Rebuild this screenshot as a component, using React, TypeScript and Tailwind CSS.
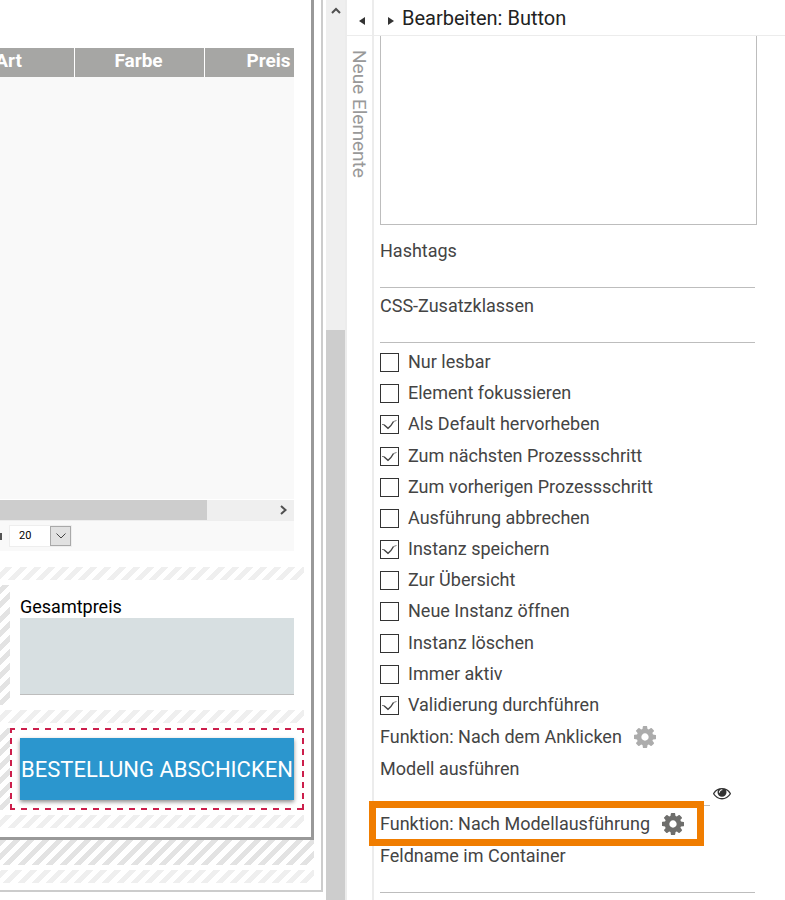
import React from 'react';

interface OptionItem {
  id: string;
  label: string;
  checked: boolean;
}

const OPTIONS: OptionItem[] = [
  { id: 'readonly', label: 'Nur lesbar', checked: false },
  { id: 'focus', label: 'Element fokussieren', checked: false },
  { id: 'default', label: 'Als Default hervorheben', checked: true },
  { id: 'next', label: 'Zum nächsten Prozessschritt', checked: true },
  { id: 'prev', label: 'Zum vorherigen Prozessschritt', checked: false },
  { id: 'cancel', label: 'Ausführung abbrechen', checked: false },
  { id: 'save', label: 'Instanz speichern', checked: true },
  { id: 'overview', label: 'Zur Übersicht', checked: false },
  { id: 'open', label: 'Neue Instanz öffnen', checked: false },
  { id: 'delete', label: 'Instanz löschen', checked: false },
  { id: 'active', label: 'Immer aktiv', checked: false },
  { id: 'validate', label: 'Validierung durchführen', checked: true },
];

const COLUMNS = ['Art', 'Farbe', 'Preis'];

const LIGHT_STRIPES =
  'bg-[repeating-linear-gradient(-45deg,#ffffff_0px,#ffffff_5px,#efefef_5px,#efefef_10px)]';
const DARK_STRIPES =
  'bg-[repeating-linear-gradient(-45deg,#ffffff_0px,#ffffff_5px,#e3e3e3_5px,#e3e3e3_10px)]';

// Long dashes on all four sides, wider than the browser's own dashed border
const DASHED_FRAME =
  'bg-[repeating-linear-gradient(90deg,#cc1f4c_0px,#cc1f4c_5px,transparent_5px,transparent_11px,#cc1f4c_11px,#cc1f4c_12px),repeating-linear-gradient(90deg,#cc1f4c_0px,#cc1f4c_5px,transparent_5px,transparent_11px,#cc1f4c_11px,#cc1f4c_12px),repeating-linear-gradient(180deg,#cc1f4c_0px,#cc1f4c_5px,transparent_5px,transparent_10px,#cc1f4c_10px,#cc1f4c_11px),repeating-linear-gradient(180deg,#cc1f4c_0px,#cc1f4c_5px,transparent_5px,transparent_10px,#cc1f4c_10px,#cc1f4c_11px)] bg-[length:100%_2px,100%_2px,2px_100%,2px_100%] bg-[position:0_0,0_100%,0_0,100%_0] bg-no-repeat';

const GearIcon: React.FC<{ className?: string }> = ({ className }) => (
  <svg viewBox="0 128 1536 1536" className={className} fill="currentColor" aria-hidden="true">
    <path d="M1024 896q0-106-75-181t-181-75-181 75-75 181 75 181 181 75 181-75 75-181zm512-109v222q0 12-8 23t-20 13l-185 28q-19 54-39 91 35 50 107 138 10 12 10 25t-9 23q-27 37-99 108t-94 71q-12 0-26-9l-138-108q-44 23-91 38-16 136-29 186-7 28-36 28h-222q-14 0-24.5-8.5t-11.5-21.5l-28-184q-49-16-90-37l-141 107q-10 9-25 9-14 0-25-11-126-114-165-168-7-10-7-23 0-12 8-23 15-21 51-66.5t54-70.5q-27-50-41-99l-183-27q-13-2-21-12.5t-8-23.5v-222q0-12 8-23t19-13l186-28q14-46 39-92-40-57-107-138-10-12-10-24 0-10 9-23 26-36 98.5-107.5t94.5-71.5q13 0 26 10l138 107q44-23 91-38 16-136 29-186 7-28 36-28h222q14 0 24.5 8.5t11.5 21.5l28 184q49 16 90 37l142-107q9-9 24-9 13 0 25 10 129 119 165 170 7 8 7 22 0 12-8 23-15 21-51 66.5t-54 70.5q26 50 41 98l183 28q13 2 21 12.5t8 23.5z" />
  </svg>
);

const EyeIcon: React.FC<{ className?: string }> = ({ className }) => (
  <svg viewBox="0 96 1792 1600" className={className} fill="currentColor" aria-hidden="true">
    <path d="M1664 960q-152-236-381-353 61 104 61 225 0 185-131.5 316.5t-316.5 131.5-316.5-131.5-131.5-316.5q0-121 61-225-229 117-381 353 133 205 333.5 326.5t434.5 121.5 434.5-121.5 333.5-326.5zm-720-384q0-20-14-34t-34-14q-125 0-214.5 89.5t-89.5 214.5q0 20 14 34t34 14 34-14 14-34q0-86 61-147t147-61q20 0 34-14t14-34zm848 384q0 34-20 69-140 230-376.5 368.5t-499.5 138.5-499.5-139-376.5-368q-20-35-20-69t20-69q140-229 376.5-368t499.5-139 499.5 139 376.5 368q20 35 20 69z" />
  </svg>
);

const Field: React.FC<{ id: string; label: string; children?: React.ReactNode }> = ({ id, label, children }) => (
  <div className="mb-0.5">
    <label htmlFor={id} className="flex h-8 items-center pb-0.5">{label}</label>
    <div className="flex">
      <input id={id} type="text" className="h-[21px] min-w-0 flex-1 border-b border-[#bdbdbd] outline-none" />
      {children}
    </div>
  </div>
);

const Option: React.FC<{ item: OptionItem }> = ({ item }) => (
  <label className="flex items-center">
    <span className="relative mr-[9px] h-[19px] w-[19px]">
      <input
        type="checkbox"
        defaultChecked={item.checked}
        className="peer block h-[19px] w-[19px] appearance-none border border-[#333333] bg-white"
      />
      <svg
        viewBox="0 0 19 19"
        className="pointer-events-none absolute inset-0 hidden h-[19px] w-[19px] peer-checked:block"
        fill="none"
        stroke="#444444"
        aria-hidden="true"
      >
        <path d="M2 9.500h2" strokeWidth="0.7" />
        <path d="M4 9.700l4 3.600q3-2 5.500-6.800" strokeWidth="1.400" />
        <path d="M13.500 6.500l3-1" strokeWidth="0.7" />
      </svg>
    </span>
    <span className="pb-0.5">{item.label}</span>
  </label>
);

const FormCanvas: React.FC = () => (
  <main className="w-[326px] shrink-0 overflow-hidden">
    <div className="mr-[3px] border-r-2 border-b-2 border-[#cccccc] pr-[7px] pb-[7px]">
      <div className="border-r-3 border-b-3 border-[#999999] pt-12 pr-[7px] pb-[9px]">
        {/* Order positions */}
        <section className="mr-2.5 bg-[#f9f9f9]">
          <div className="flex h-[451px] flex-col overflow-hidden">
            <table className="-ml-[55px] w-[390px] table-fixed border-separate border-spacing-0 bg-[#a6a6a4] text-[19px] text-white">
              <thead>
                <tr className="h-[29px]">
                  {COLUMNS.map(col => (
                    <th key={col} className="border-r border-white p-0 pr-0.5 pb-1 text-center leading-6 font-bold">{col}</th>
                  ))}
                </tr>
              </thead>
            </table>
          </div>
          <div className="flex h-[22px] items-stretch border-y border-t-white border-b-[#eeeeee] bg-[#efefef]">
            <div className="w-[207px] bg-[#cdcdcd]" />
            <button type="button" aria-label="Nach rechts" className="ml-auto flex w-[21px] items-center justify-center">
              <svg viewBox="0 0 8 10" className="h-2.5 w-2" fill="none" stroke="#505050" strokeWidth="2" aria-hidden="true">
                <path d="M1 1l4.500 4L1 9" />
              </svg>
            </button>
          </div>
          <div className="flex h-[30px] items-center">
            <span className="h-[7px] w-0.5 bg-[#555555]" />
            <div className="relative ml-[7px] h-[22px] w-[63px] border border-[#eeeeee] bg-white">
              <select
                aria-label="Einträge pro Seite"
                className="block h-5 w-full appearance-none pl-[9px] text-[11px] leading-5 text-black outline-none"
              >
                <option>20</option>
              </select>
              <span className="pointer-events-none absolute top-0 right-0 flex h-5 w-[21px] items-center justify-center border border-[#a9a9a9] bg-[#e1e1e1]">
                <svg viewBox="0 0 10 6" className="h-1.5 w-2.5" fill="none" stroke="#444444" aria-hidden="true">
                  <path d="M0.500 0.500L5 5l4.500-4.500" />
                </svg>
              </span>
            </div>
          </div>
        </section>

        <div className={`mt-4 h-[13px] ${LIGHT_STRIPES}`} />

        {/* Total price */}
        <section className="mt-[5px] flex">
          <div className={`w-2.5 ${DARK_STRIPES}`} />
          <div className="flex-1 p-2.5">
            <label htmlFor="total" className="flex h-[23px] items-center text-black">Gesamtpreis</label>
            <input id="total" type="text" readOnly className="block h-[77px] w-full border-b border-[#bdbdbd] bg-[#d7dfe1] outline-none" />
          </div>
        </section>

        <div className={`mt-[5px] h-[13px] ${LIGHT_STRIPES}`} />

        {/* Selected element */}
        <section className="mt-[5px] flex">
          <div className={`w-2.5 ${DARK_STRIPES}`} />
          <div className={`flex-1 p-2.5 ${DASHED_FRAME}`}>
            <button
              type="button"
              className="block h-[62px] w-full bg-[#2b96ce] text-[22px] whitespace-nowrap text-white shadow-[0_2px_4px_rgba(0,0,0,0.45)]"
            >
              BESTELLUNG ABSCHICKEN
            </button>
          </div>
        </section>

        <div className={`mt-[5px] h-[13px] ${LIGHT_STRIPES}`} />
      </div>

      <div className={`h-[25px] ${DARK_STRIPES}`} />
      <div className={`mt-[5px] h-[13px] ${LIGHT_STRIPES}`} />
    </div>
  </main>
);

const CanvasScrollbar: React.FC = () => (
  <div className="flex w-[21px] shrink-0 flex-col border-r-2 border-[#ececec] bg-[#efefef]">
    <button type="button" aria-label="Nach oben" className="flex h-5 items-center justify-center">
      <svg viewBox="0 0 10 7" className="h-[7px] w-2.5" fill="none" stroke="#505050" strokeWidth="2" aria-hidden="true">
        <path d="M1 6l4-4 4 4" />
      </svg>
    </button>
    <div className="mt-[310px] flex-1 bg-[#cdcdcd]" />
  </div>
);

const ElementStrip: React.FC = () => (
  <aside className="flex w-[27px] shrink-0 flex-col border-r-2 border-[#ececec]">
    <button
      type="button"
      aria-label="Neue Elemente ausklappen"
      className="flex h-9 items-center justify-center border-b border-[#ececec] pt-1.5 pl-1"
    >
      <svg viewBox="0 0 6 8" className="h-2 w-1.5" fill="#333333" aria-hidden="true">
        <path d="M6 0v8L0 4z" />
      </svg>
    </button>
    <span className="mt-3.5 self-center text-[19px] leading-[25px] text-[#999999] [writing-mode:vertical-rl]">Neue Elemente</span>
  </aside>
);

const FunctionRow: React.FC<{ label: string; active?: boolean }> = ({ label, active }) => (
  <div className="relative flex h-8 w-fit items-center gap-3">
    <span className="pb-0.5">{label}</span>
    <button type="button" aria-label={label}>
      <GearIcon className={`block h-[22px] w-[22px] ${active ? 'text-[#6e6e6c]' : 'text-[#acacac]'}`} />
    </button>
    {active && <div className="pointer-events-none absolute -top-[7px] -right-5 -bottom-1.5 -left-[11px] border-7 border-[#f07d00]" />}
  </div>
);

const EditPanel: React.FC = () => (
  <section className="min-w-0 flex-1 text-[#444444]">
    <header className="flex h-9 items-center border-b border-[#ececec] pl-3.5">
      <button type="button" aria-label="Einklappen" className="mt-1.5 mr-2">
        <svg viewBox="0 0 6 8" className="block h-2 w-1.5" fill="#333333" aria-hidden="true">
          <path d="M0 0v8l6-4z" />
        </svg>
      </button>
      <h1 className="text-[20px] text-[#222222]">Bearbeiten: Button</h1>
    </header>
    <div className="pr-[30px] pl-1.5">
      <div className="-mr-0.5 mb-2.5">
        <textarea
          aria-label="Beschreibung"
          className="block h-[189px] w-full resize-none border border-t-0 border-[#bdbdbd] outline-none"
        />
      </div>
      <Field id="hashtags" label="Hashtags" />
      <Field id="css" label="CSS-Zusatzklassen" />
      <div className="grid h-[376px] auto-rows-fr pt-0.5">
        {OPTIONS.map(item => (
          <Option key={item.id} item={item} />
        ))}
      </div>
      <FunctionRow label="Funktion: Nach dem Anklicken" />
      <Field id="model" label="Modell ausführen">
        <button type="button" aria-label="Modell anzeigen" className="flex w-[45px] items-start pl-[3px]">
          <EyeIcon className="h-4 w-[18px] text-[#333333]" />
        </button>
      </Field>
      <FunctionRow label="Funktion: Nach Modellausführung" active />
      <Field id="fieldname" label="Feldname im Container" />
    </div>
  </section>
);

export default function App() {
  return (
    <div className="flex min-h-screen overflow-hidden bg-white font-[Roboto,'Liberation_Sans',sans-serif] text-[18px]">
      <FormCanvas />
      <CanvasScrollbar />
      <ElementStrip />
      <EditPanel />
    </div>
  );
}
